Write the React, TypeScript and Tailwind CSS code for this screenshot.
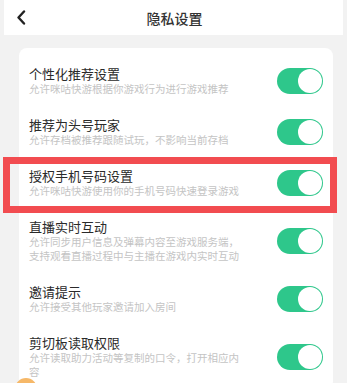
const rows = [
  { title: "个性化推荐设置", desc: ["允许咪咕快游根据你游戏行为进行游戏推荐"] },
  { title: "推荐为头号玩家", desc: ["允许存档被推荐跟随试玩，不影响当前存档"] },
  { title: "授权手机号码设置", desc: ["允许咪咕快游使用你的手机号码快速登录游戏"], marked: true },
  { title: "直播实时互动", desc: ["允许同步用户信息及弹幕内容至游戏服务端，", "支持观看直播过程中与主播在游戏内实时互动"] },
  { title: "邀请提示", desc: ["允许接受其他玩家邀请加入房间"] },
  { title: "剪切板读取权限", desc: ["允许读取助力活动等复制的口令，打开相应内", "容"] },
];

function Toggle() {
  return (
    <div className="w-[46px] h-[26px] rounded-full bg-[#2ec78b] flex items-center justify-end p-[1px] shrink-0">
      <div className="w-[24px] h-[24px] rounded-full bg-white" />
    </div>
  );
}

export default function App() {
  return (
    <div
      className="relative w-[347px] h-[383px] overflow-hidden bg-[#f2f2f2]"
      style={{ fontFamily: '"Noto Sans CJK SC", "Noto Sans", sans-serif' }}
    >
      {/* top bar */}
      <div className="mx-[4px] h-[35px] bg-white flex items-center relative">
        <svg className="absolute left-[12px] top-[10px]" width="10" height="15" viewBox="0 0 10 15">
          <path d="M8 1.5 L2.5 7.5 L8 13.5" fill="none" stroke="#222" strokeWidth="2.4" strokeLinecap="round" strokeLinejoin="round" />
        </svg>
        <div className="flex-1 text-center text-[14px] leading-[20px] font-medium text-[#333] pl-[2px]">隐私设置</div>
      </div>

      {/* settings card */}
      <div className="ml-[19px] mr-[14px] mt-[13px] bg-white rounded-lg pt-[7px]">
        {rows.map((r) => (
          <div key={r.title} className="relative flex items-center pl-[10px] pr-[10px] py-[10.5px]">
            <div className="flex-1 min-w-0">
              <div className="text-[13px] leading-[16px] text-[#2a2a2a]">{r.title}</div>
              {r.desc.map((d) => (
                <div key={d} className="text-[10.5px] leading-[14px] text-[#c4c4c4] whitespace-nowrap">{d}</div>
              ))}
            </div>
            <Toggle />
            {r.marked && (
              <div className="absolute left-[-16px] right-[-4px] top-0 bottom-[-5px] border-[7px] border-[#f24c50] pointer-events-none" />
            )}
          </div>
        ))}
      </div>

      <div className="absolute left-[15px] top-[378px] w-[22px] h-[22px] rounded-full bg-[#f6b868]" />
    </div>
  );
}
